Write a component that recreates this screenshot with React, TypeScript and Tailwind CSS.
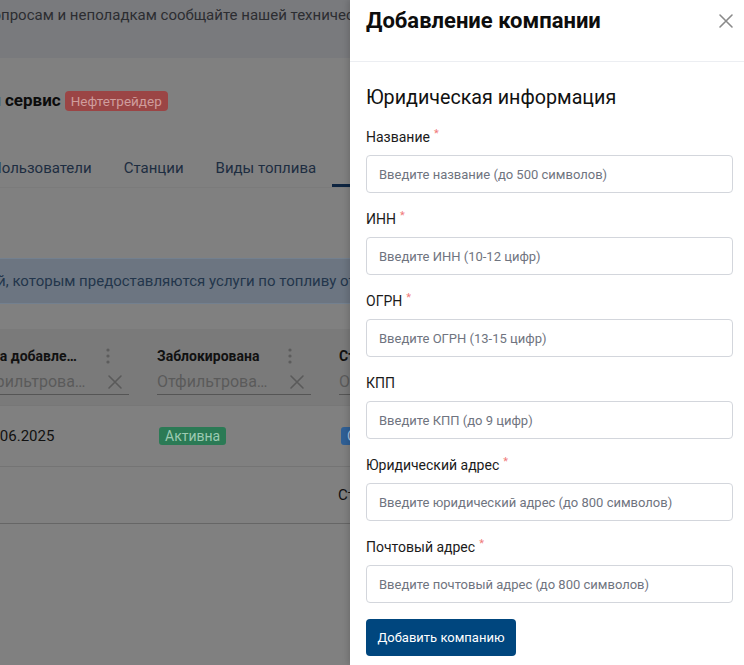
import React from "react";

const font = { fontFamily: 'Roboto, "Noto Sans", sans-serif' };

function Dots() {
  return (
    <svg width="4" height="16" viewBox="0 0 4 16" className="shrink-0">
      <circle cx="2" cy="2" r="1.6" fill="#5c5c5c" />
      <circle cx="2" cy="8" r="1.6" fill="#5c5c5c" />
      <circle cx="2" cy="14" r="1.6" fill="#5c5c5c" />
    </svg>
  );
}

function SmallX({ color = "#5a5a5a", size = 16 }: { color?: string; size?: number }) {
  return (
    <svg width={size} height={size} viewBox="0 0 16 16" className="shrink-0">
      <path d="M2 2 L14 14 M14 2 L2 14" stroke={color} strokeWidth="1.6" strokeLinecap="round" />
    </svg>
  );
}

function Column({ title, filter, titleW, children }: { title: string; filter: string; titleW: string; children?: React.ReactNode }) {
  return (
    <div className="w-[182px] shrink-0 flex flex-col">
      <div className="bg-[#7a7a7a] pt-[14px] pr-[28px]">
        <div className="flex items-center justify-between h-[26px]">
          <span className={"text-[14px] font-bold text-[#111] truncate " + titleW}>{title}</span>
          <span className="mr-[19px]"><Dots /></span>
        </div>
        <div className="flex items-center justify-between h-[26px] border-b border-[#555] mb-[10px]">
          <span className="text-[16px] text-[#5a5a5a] truncate w-[116px]">{filter}</span>
          <span className="mr-[6px]"><SmallX /></span>
        </div>
      </div>
      <div className="h-[62px] flex items-center border-b border-[#747474] border-t border-t-[#777]">
        {children}
      </div>
    </div>
  );
}

function Field({ label, placeholder, required = true }: { label: string; placeholder: string; required?: boolean }) {
  return (
    <div className="mb-4">
      <div className="h-5 leading-5 text-[14px] text-[#1b1b1b] mb-2 flex items-start">
        <span>{label}</span>
        {required && <span className="text-[#f07a7a] text-[11px] leading-[14px] ml-[4px]">*</span>}
      </div>
      <input
        placeholder={placeholder}
        className="w-full h-[38px] rounded-[4px] border border-[#d3d6dc] px-3 text-[13px] text-[#222] placeholder:text-[#6f7480] outline-none bg-white"
        style={font}
      />
    </div>
  );
}

function LeftCut({ children, className }: { children: React.ReactNode; className: string }) {
  return <span className={"w-0 flex justify-end whitespace-nowrap " + className}>{children}</span>;
}

export default function App() {
  return (
    <div className="relative w-[744px] h-[665px] overflow-hidden bg-[#808080]" style={font}>
      {/* Dimmed background page */}
      <div className="flex flex-col w-full">
        <div className="h-[58px] bg-[#797a7d] pt-[3px] overflow-hidden">
          <div className="flex text-[15px] leading-[24px] text-[#2c2d31] whitespace-nowrap ml-[1px]">
            <LeftCut className="">По во</LeftCut>
            <span>просам и неполадкам сообщайте нашей технической поддержке</span>
          </div>
        </div>
        <div className="h-[28px]" />
        <div className="flex items-center h-[30px] ml-[5px] gap-[4px]">
          <span className="flex text-[17px] font-bold text-[#0c0c0c] whitespace-nowrap">
            <LeftCut className="">Топливный&nbsp;</LeftCut>
            <span>сервис</span>
          </span>
          <span className="bg-[#9b4545] text-[#cf9d9d] text-[13.5px] leading-[20px] px-[6px] rounded-[4px] whitespace-nowrap">
            Нефтетрейдер
          </span>
        </div>
        <div className="h-[35px]" />
        <div className="flex items-end h-[37px] border-b border-[#7b7b7b] -ml-[25px]">
          {["Пользователи", "Станции", "Виды топлива"].map((t) => (
            <div key={t} className="px-4 pb-[8px] text-[15px] leading-[22px] text-[#1d2d41] whitespace-nowrap">
              {t}
            </div>
          ))}
          <div className="pl-[18px] pr-4 pb-[5px] text-[15px] leading-[22px] text-[#1d2d41] whitespace-nowrap border-b-[3px] border-[#0d2440]">
            Компании
          </div>
        </div>
        <div className="h-[70px]" />
        <div className="h-[46px] bg-[#6c7581] border-y border-[#73808f] flex items-center -ml-[120px]">
          <span className="text-[15px] text-[#23354b] whitespace-nowrap">
            Список компаний, которым предоставляются услуги по топливу от нефтетрейдера
          </span>
        </div>
        <div className="h-[25px]" />
        <div className="flex -ml-[25px]">
          <Column title="Дата добавления" filter="Отфильтровать" titleW="w-[106px]">
            <span className="text-[15px] text-[#111] whitespace-nowrap ml-[4px]">12.06.2025</span>
          </Column>
          <Column title="Заблокирована" filter="Отфильтровать" titleW="w-[120px]">
            <span className="bg-[#2b7a55] text-[#9ccab2] text-[14px] leading-[18px] px-[6px] rounded-[3px] ml-[2px]">
              Активна
            </span>
          </Column>
          <Column title="Статус" filter="Отфильтровать" titleW="w-[100px]">
            <span className="bg-[#2f5f95] text-[#a9c2de] text-[14px] leading-[18px] px-[6px] rounded-[3px] ml-[2px]">
              Одобрена
            </span>
          </Column>
        </div>
        <div className="h-[57px] border-b border-[#666] flex items-center pl-[338px]">
          <span className="text-[15px] text-[#111] whitespace-nowrap">Строк на странице</span>
        </div>
      </div>

      {/* Drawer */}
      <div className="absolute top-0 right-0 h-full w-[394px] bg-white shadow-[-2px_0_6px_rgba(0,0,0,0.15)] flex flex-col">
        <div className="h-[62px] shrink-0 border-b border-[#eceef2] flex items-start justify-between pl-4 pr-[10px]">
          <div className="pt-[5px] text-[22px] leading-[32px] font-bold text-[#0d0d0d]">Добавление компании</div>
          <div className="pt-[13px]">
            <SmallX color="#8a8a8a" size={16} />
          </div>
        </div>
        <div className="pl-4 pr-[11px] pt-[22px]">
          <div className="text-[19.7px] leading-[28px] text-[#111] mb-[15px]">Юридическая информация</div>
          <Field label="Название" placeholder="Введите название (до 500 символов)" />
          <Field label="ИНН" placeholder="Введите ИНН (10-12 цифр)" />
          <Field label="ОГРН" placeholder="Введите ОГРН (13-15 цифр)" />
          <Field label="КПП" placeholder="Введите КПП (до 9 цифр)" required={false} />
          <Field label="Юридический адрес" placeholder="Введите юридический адрес (до 800 символов)" />
          <Field label="Почтовый адрес" placeholder="Введите почтовый адрес (до 800 символов)" />
          <button className="h-[37px] w-[150px] rounded-[4px] bg-[#00467e] text-white text-[13px]" style={font}>
            Добавить компанию
          </button>
        </div>
      </div>
    </div>
  );
}
